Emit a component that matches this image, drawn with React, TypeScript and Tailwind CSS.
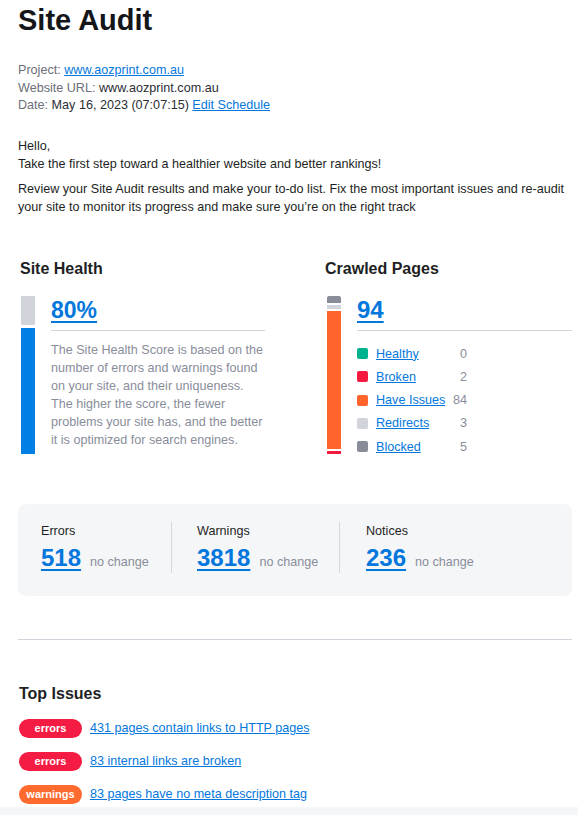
import React from 'react';

const font = { fontFamily: '"Liberation Sans", Arial, sans-serif' };

const legend = [
  { label: 'Healthy', value: 0, color: 'bg-[#00b38f]' },
  { label: 'Broken', value: 2, color: 'bg-[#f3193f]' },
  { label: 'Have Issues', value: 84, color: 'bg-[#ff642d]' },
  { label: 'Redirects', value: 3, color: 'bg-[#d1d4db]' },
  { label: 'Blocked', value: 5, color: 'bg-[#898d9a]' },
];

const stats = [
  { label: 'Errors', value: 518, cls: 'w-[154px] pl-[23px] border-r border-[#d6d8de]' },
  { label: 'Warnings', value: 3818, cls: 'w-[168px] pl-[25px] border-r border-[#d6d8de]' },
  { label: 'Notices', value: 236, cls: 'pl-[26px]' },
];

const issues = [
  { tag: 'errors', color: 'bg-[#f51c43]', text: '431 pages contain links to HTTP pages' },
  { tag: 'errors', color: 'bg-[#f51c43]', text: '83 internal links are broken' },
  { tag: 'warnings', color: 'bg-[#ff6a2f]', text: '83 pages have no meta description tag' },
];

const App: React.FC = () => {
  return (
    <div style={font} className="bg-white text-[#1e1f24] min-h-[815px] flex flex-col">
      <div className="pl-[18px] pr-[6px]">
        <h1 className="text-[29px] leading-[32px] font-bold pt-[4px] text-[#15161a]">Site Audit</h1>

        <div className="mt-[26px] text-[12.6px] leading-[17.5px] text-[#2b2d33]">
          <div>
            <span className="text-[#6c6e79]">Project: </span>
            <a href="#" className="text-[#0477dd] underline">www.aozprint.com.au</a>
          </div>
          <div>
            <span className="text-[#6c6e79]">Website URL: </span>www.aozprint.com.au
          </div>
          <div>
            <span className="text-[#6c6e79]">Date: </span>May 16, 2023 (07:07:15){' '}
            <a href="#" className="text-[#0477dd] underline">Edit Schedule</a>
          </div>
        </div>

        <div className="mt-[22px] text-[12.6px] leading-[18px] text-[#1e1f24]">
          <p>Hello,</p>
          <p>Take the first step toward a healthier website and better rankings!</p>
          <p className="mt-[7px]">
            Review your Site Audit results and make your to-do list. Fix the most important issues and re-audit
            your site to monitor its progress and make sure you’re on the right track
          </p>
        </div>

        {/* health + crawled */}
        <div className="flex mt-[43px]">
          <div className="w-[307px] pl-[2px]">
            <h2 className="text-[16px] leading-[20px] font-bold">Site Health</h2>
            <div className="flex mt-[17px]">
              <div className="w-[14px] ml-[1px] h-[158px] flex flex-col gap-[3px]">
                <div className="h-[29px] bg-[#d1d4db]" />
                <div className="flex-1 bg-[#0080e5]" />
              </div>
              <div className="ml-[16px] w-[214px]">
                <a href="#" className="block text-[23px] leading-[28px] font-bold text-[#0477dd] underline decoration-[2px] underline-offset-[3px] h-[34px]">80%</a>
                <div className="border-t border-[#d1d4db]" />
                <p className="mt-[10px] text-[12.6px] leading-[18px] text-[#898d9a]">
                  The Site Health Score is based on the number of errors and warnings found on your site, and their uniqueness.
                  The higher the score, the fewer problems your site has, and the better it is optimized for search engines.
                </p>
              </div>
            </div>
          </div>

          <div className="flex-1">
            <h2 className="text-[16px] leading-[20px] font-bold">Crawled Pages</h2>
            <div className="flex mt-[17px]">
              <div className="w-[14px] ml-[2px] h-[158px] flex flex-col gap-[2px]">
                <div className="h-[7px] bg-[#898d9a] rounded-t-[2px]" />
                <div className="h-[4px] bg-[#d1d4db]" />
                <div className="flex-1 bg-[#ff642d]" />
                <div className="h-[3px] bg-[#f3193f]" />
              </div>
              <div className="ml-[16px] flex-1">
                <a href="#" className="block text-[24px] leading-[28px] font-bold text-[#0477dd] underline decoration-[2px] underline-offset-[3px] h-[34px]">94</a>
                <div className="border-t border-[#d1d4db]" />
                <div className="mt-[14px] flex flex-col gap-[5.3px] text-[12.6px] leading-[18px]">
                  {legend.map((l) => (
                    <div key={l.label} className="flex items-center">
                      <span className={`w-[11px] h-[11px] rounded-[2px] shrink-0 ${l.color}`} />
                      <span className="ml-[8px] w-[72px] shrink-0 whitespace-nowrap">
                        <a href="#" className="text-[#0477dd] underline">{l.label}</a>
                      </span>
                      <span className="w-[19px] text-right text-[#898d9a]">{l.value}</span>
                    </div>
                  ))}
                </div>
              </div>
            </div>
          </div>
        </div>

        {/* stats box */}
        <div className="mt-[48px] bg-[#f5f6f8] rounded-[8px] pt-[18px] pb-[23px] flex">
          {stats.map((s) => (
            <div key={s.label} className={`h-[51px] ${s.cls}`}>
              <div className="text-[12.6px] leading-[18px] text-[#1e1f24]">{s.label}</div>
              <div className="flex items-baseline mt-[4px]">
                <a href="#" className="text-[24px] leading-[28px] font-bold text-[#0477dd] underline decoration-[2px] underline-offset-[3px]">{s.value}</a>
                <span className="ml-[9px] text-[12.6px] text-[#898d9a]">no change</span>
              </div>
            </div>
          ))}
        </div>

        <div className="mt-[43px] border-t border-[#d1d4db]" />

        <h2 className="mt-[44px] ml-[1px] text-[16px] leading-[20px] font-bold">Top Issues</h2>
        <div className="mt-[15px] flex flex-col gap-[14px]">
          {issues.map((i, idx) => (
            <div key={idx} className="flex items-center">
              <span className={`ml-[1px] w-[63px] h-[19px] rounded-full ${i.color} text-white text-[11px] font-bold flex items-center justify-center`}>
                {i.tag}
              </span>
              <a href="#" className="ml-[8px] text-[12.6px] leading-[18px] text-[#0477dd] underline">{i.text}</a>
            </div>
          ))}
        </div>
      </div>
      <div className="mt-[3px] flex-1 bg-[#f5f6f9]" />
    </div>
  );
};

export default App;
